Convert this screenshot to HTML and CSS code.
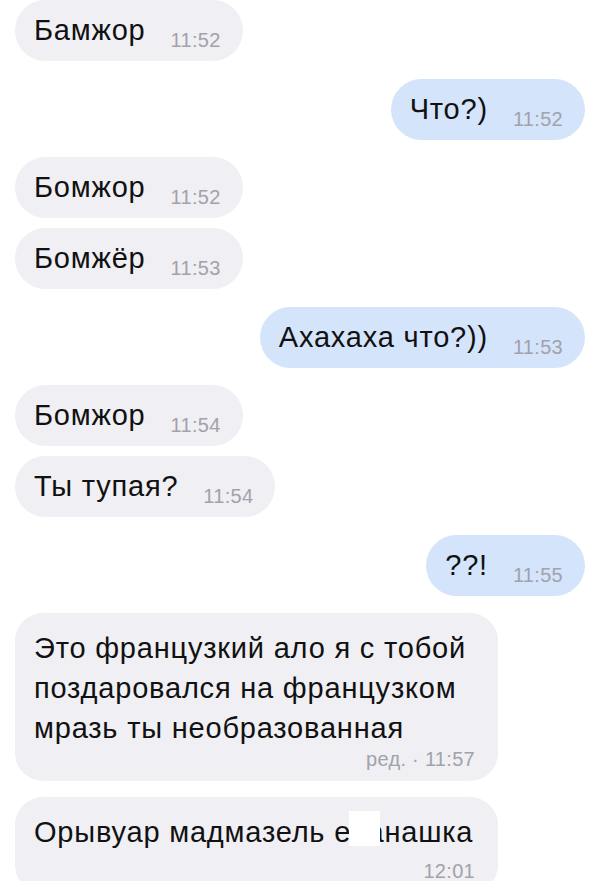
FILE: index.html
```html
<!DOCTYPE html>
<html lang="ru">
<head>
    <meta charset="UTF-8">
    <meta name="viewport" content="width=device-width, initial-scale=1.0">
    <title>Чат</title>
    <link rel="stylesheet" href="styles.css">
</head>
<body>
    <div class="chat">
        <div class="msg in"><span class="text">Бамжор</span><span class="time">11:52</span></div>
        <div class="msg out"><span class="text">Что?)</span><span class="time">11:52</span></div>
        <div class="msg in"><span class="text">Бомжор</span><span class="time">11:52</span></div>
        <div class="msg in"><span class="text">Бомжёр</span><span class="time">11:53</span></div>
        <div class="msg out"><span class="text">Ахахаха что?))</span><span class="time">11:53</span></div>
        <div class="msg in"><span class="text">Бомжор</span><span class="time">11:54</span></div>
        <div class="msg in"><span class="text">Ты тупая?</span><span class="time">11:54</span></div>
        <div class="msg out"><span class="text">??!</span><span class="time">11:55</span></div>

        <!-- long messages: time goes on its own line -->
        <div class="msg in long">
            <p class="text">Это французкий ало я с тобой поздаровался на французком мразь ты необразованная</p>
            <span class="time">ред. · 11:57</span>
        </div>
        <div class="msg in long last">
            <p class="text">Орывуар мадмазель е<span class="censor">ба</span>нашка</p>
            <span class="time">12:01</span>
        </div>
    </div>
</body>
</html>
```

FILE: styles.css
```css
body {
    margin: 0;
    background: #fff;
    font-family: "Liberation Sans", Arial, sans-serif;
    color: #111;
}
.chat {
    display: flex;
    flex-direction: column;
    padding: 0 15px;
}
.msg {
    display: flex;
    align-items: flex-start;
    gap: 25px;
    padding: 13px 22px 11px 19px;
    border-radius: 31px;
    margin-top: 17px;
}
.msg:first-child {
    margin-top: 0;
}
.in + .in {
    margin-top: 10px;
}
.in + .out {
    margin-top: 18px;
}
.in {
    align-self: flex-start;
    background: #efeff4;
}
.out {
    align-self: flex-end;
    background: #d4e4fb;
}
.text {
    margin: 0;
    font-size: 29px;
    line-height: 34px;
    letter-spacing: 0.8px;
}
.time {
    margin-top: 17px;
    font-size: 20px;
    line-height: 20px;
    letter-spacing: 0.3px;
    color: #a2a2aa;
    white-space: nowrap;
}
.msg.long {
    display: block;
    width: 441px;
    padding: 15px 23px 11px 19px;
    border-radius: 28px;
}
.in.long + .in.long {
    margin-top: 16px;
}
.long .text {
    line-height: 40px;
}
.long .time {
    display: block;
    margin-top: 0;
    line-height: 22px;
    text-align: right;
}
.long.last .time {
    margin-top: 8px;
}
.censor {
    position: relative;
}
.censor::after {
    content: "";
    position: absolute;
    left: -2px;
    top: -5px;
    width: 31px;
    height: 35px;
    background: #fff;
}
```
